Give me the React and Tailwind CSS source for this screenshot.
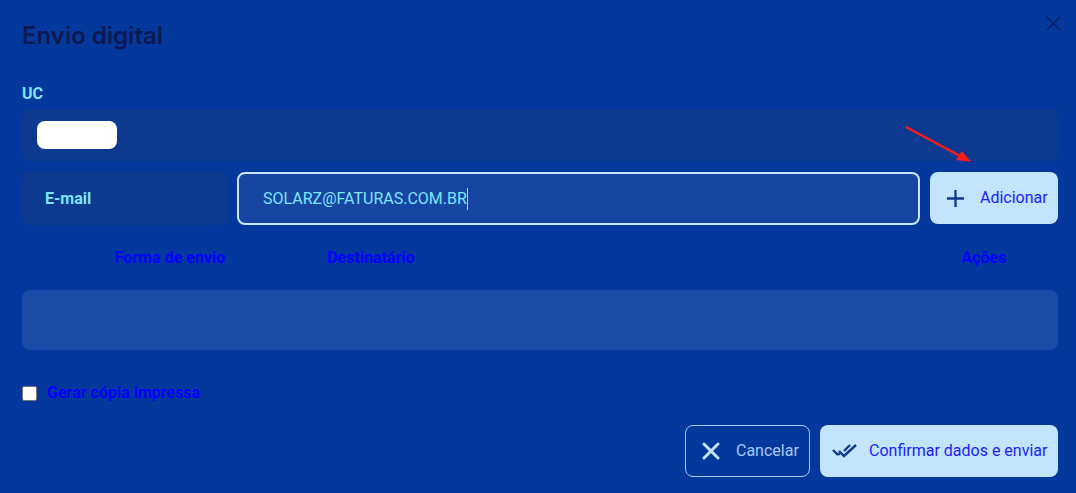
import React from "react";

export default function App() {
  return (
    <div
      className="w-[1076px] h-[493px] bg-[#05389c] relative overflow-hidden"
      style={{ fontFamily: "Roboto, 'Liberation Sans', sans-serif" }}
    >
      <div className="pl-[22px] pr-[18px] pt-[21px]">
        <h1
          className="text-[24px] leading-[30px] font-semibold text-[#0a1952]"
          style={{ fontFamily: "Inter, 'Noto Sans', sans-serif" }}
        >
          Envio digital
        </h1>

        <div className="mt-[35px] text-[16px] leading-[16px] font-bold text-[#7ee6f8]">UC</div>
        <div className="mt-[7px] h-[52px] rounded-[6px] bg-[#0d3a8e] flex items-center px-[15px]">
          <div className="w-[80px] h-[28px] rounded-[8px] bg-white" />
        </div>

        <div className="mt-[11px] flex gap-[10px] h-[53px]">
          <div className="w-[205px] rounded-[6px] bg-[#0d3a8e] flex items-center pl-[23px] text-[16px] font-bold text-[#7ee6f8]">
            E-mail
          </div>
          <div className="w-[683px] rounded-[8px] border-2 border-[#c8e6fc] bg-[#1745a2] flex items-center pl-[24px] text-[16px] text-[#7ee6f8]">
            <span>SOLARZ@FATURAS.COM.BR</span>
            <span className="w-px h-[22px] bg-[#7ee6f8]" />
          </div>
          <button className="flex-1 h-[52px] rounded-[8px] bg-[#c2e4fc] flex items-center pl-[16px] gap-[15px] text-[16px] text-[#1d1dff]">
            <svg width="19" height="19" viewBox="0 0 20 20" fill="none" stroke="#0d3a8e" strokeWidth="2.4">
              <path d="M10 1v18M1 10h18" />
            </svg>
            <span>Adicionar</span>
          </button>
        </div>

        <div className="mt-[23px] grid grid-cols-[296px_106px_1fr_148px] text-[16px] leading-[20px] font-bold text-[#0000ff]">
          <div className="text-center">Forma de envio</div>
          <div className="text-center">Destinatário</div>
          <div />
          <div className="text-center">Ações</div>
        </div>

        <div className="mt-[22px] h-[60px] rounded-[8px] bg-[#1b4ba7]" />

        <label className="mt-[33px] h-[20px] flex items-center gap-[10px] text-[16px] font-bold text-[#0000ff]">
          <span className="w-[15px] h-[15px] bg-white border border-[#767676] rounded-[2px]" />
          <span>Gerar cópia impressa</span>
        </label>

        <div className="mt-[22px] flex justify-end gap-[10px]">
          <button className="w-[125px] h-[52px] rounded-[8px] border border-[#a9c9f0] flex items-center pl-[16px] gap-[16px] text-[16px] text-[#a9c8ee]">
            <svg width="18" height="18" viewBox="0 0 18 18" fill="none" stroke="#c2e4fc" strokeWidth="3" strokeLinecap="round">
              <path d="M2 2l14 14M16 2L2 16" />
            </svg>
            <span>Cancelar</span>
          </button>
          <button className="w-[238px] h-[52px] rounded-[8px] bg-[#c2e4fc] flex items-center pl-[12px] gap-[11px] text-[16px] text-[#1d1dff]">
            <svg width="26" height="16" viewBox="0 0 26 16" fill="none" stroke="#0d3a8e" strokeWidth="2.4">
              <path d="M1 7l5 5M6 12l3-3M7 8l5 5L24 2M12 8l6-6" />
            </svg>
            <span>Confirmar dados e enviar</span>
          </button>
        </div>
      </div>

      <svg className="absolute left-[1046px] top-[16px]" width="15" height="15" viewBox="0 0 15 15" stroke="#0b1f5e" strokeWidth="1.5">
        <path d="M1 1l13 13M14 1L1 14" />
      </svg>

      <svg className="absolute left-[904px] top-[124px]" width="70" height="42" viewBox="0 0 70 42">
        <path d="M2 3L58 33" stroke="#ff1a1a" strokeWidth="2.5" />
        <path d="M67 38L52 36L58 27Z" fill="#ff1a1a" />
      </svg>
    </div>
  );
}
